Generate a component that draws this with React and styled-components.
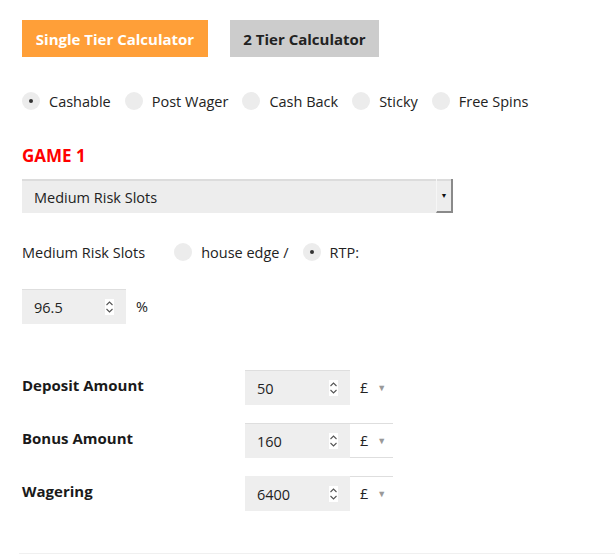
import styled, { createGlobalStyle } from "styled-components";

const Global = createGlobalStyle`
  body {
    margin: 0;
    background: #fff;
    font-family: "Open Sans", "Noto Sans", sans-serif;
    color: #222;
  }
`;

const Page = styled.div`
  width: 615px;
  height: 555px;
  box-sizing: border-box;
  padding: 20px 0 0 22px;
  position: relative;
  overflow: hidden;
`;

const Tabs = styled.div`
  display: flex;
  gap: 22px;
`;

const Tab = styled.button`
  width: ${(p) => p.$w}px;
  height: 37px;
  padding: 0;
  border: 0;
  font-family: inherit;
  font-size: 15px;
  font-weight: 700;
  background: ${(p) => (p.$active ? "#ff9f38" : "#cccccc")};
  color: ${(p) => (p.$active ? "#fff" : "#222")};
`;

const RadioRow = styled.div`
  display: flex;
  align-items: center;
  margin-top: 35px;
  height: 18px;
`;

const Option = styled.label`
  display: flex;
  align-items: center;
  gap: 9px;
  margin-right: 14px;
  font-size: 14.5px;
  color: #222;
`;

const Dot = styled.span`
  width: 18px;
  height: 18px;
  border-radius: 50%;
  background: #ececec;
  display: flex;
  align-items: center;
  justify-content: center;
  flex-shrink: 0;

  &::after {
    content: "";
    width: 4px;
    height: 4px;
    border-radius: 50%;
    background: ${(p) => (p.$on ? "#333" : "transparent")};
  }
`;

const Heading = styled.h2`
  margin: 35px 0 0;
  font-size: 17px;
  font-weight: 700;
  color: #f00;
  line-height: 22px;
`;

const Select = styled.div`
  margin-top: 12px;
  width: 431px;
  height: 34px;
  box-sizing: border-box;
  display: flex;
  background: #ededed;
  border-top: 2px solid #dcdcdc;
`;

const SelectText = styled.span`
  flex: 1;
  padding-left: 12px;
  display: flex;
  align-items: center;
  font-size: 14.5px;
`;

const SelectArrow = styled.span`
  width: 14px;
  display: flex;
  align-items: center;
  justify-content: center;
  border-left: 1px solid #f6f6f6;
  border-right: 2px solid #8a8a8a;
  border-bottom: 2px solid #8a8a8a;
  margin-top: -2px;
  font-size: 7px;
  color: #111;
`;

const EdgeRow = styled.div`
  display: flex;
  align-items: center;
  margin-top: 30px;
  height: 18px;
`;

const Plain = styled.span`
  font-size: 14.5px;
  margin-right: 29px;
`;

const PercentRow = styled.div`
  display: flex;
  align-items: center;
  gap: 10px;
  margin-top: 28px;
  font-size: 14.5px;
`;

const NumBox = styled.div`
  width: ${(p) => p.$w || 105}px;
  height: 35px;
  box-sizing: border-box;
  background: #eeeeee;
  border-top: 1px solid ${(p) => (p.$line ? "#dedede" : "#eeeeee")};
  display: flex;
  align-items: center;
  padding: 0 12px;
  font-size: 14.5px;
  color: #222;
`;

const Value = styled.span`
  flex: 1;
`;

const Spinner = styled.span`
  width: 9px;
  height: 16px;
  background: #fff;
  display: flex;
`;

const Fields = styled.div`
  margin-top: 46px;
  display: flex;
  flex-direction: column;
  gap: 18px;
`;

const Field = styled.div`
  display: flex;
  align-items: center;
  height: 35px;
`;

const Label = styled.span`
  width: 223px;
  font-size: 15px;
  font-weight: 700;
  color: #1a1a1a;
  margin-top: -5px;
`;

const Currency = styled.div`
  width: 43px;
  height: 35px;
  box-sizing: border-box;
  padding-left: 10px;
  display: flex;
  align-items: center;
  gap: 9px;
  font-size: 14.5px;
  border-top: 1px solid ${(p) => (p.$top ? "#dedede" : "transparent")};
  border-bottom: 1px solid ${(p) => (p.$bottom ? "#dedede" : "transparent")};
`;

const Caret = styled.span`
  font-size: 9px;
  color: #999;
`;

const Rule = styled.div`
  position: absolute;
  left: 19px;
  right: 0;
  bottom: 1px;
  height: 1px;
  background: #f0f0f0;
`;

const SpinIcon = () => (
  <Spinner>
    <svg width="9" height="16" viewBox="0 0 9 16">
      <path d="M1.5 6 L4.5 3 L7.5 6" fill="none" stroke="#555" strokeWidth="1.1" />
      <path d="M1.5 10 L4.5 13 L7.5 10" fill="none" stroke="#555" strokeWidth="1.1" />
    </svg>
  </Spinner>
);

const bonusTypes = [
  { name: "Cashable", on: true },
  { name: "Post Wager" },
  { name: "Cash Back" },
  { name: "Sticky" },
  { name: "Free Spins" },
];

const amounts = [
  { label: "Deposit Amount", value: "50", top: false, bottom: false, line: true },
  { label: "Bonus Amount", value: "160", top: true, bottom: true, line: true },
  { label: "Wagering", value: "6400", top: true, bottom: false, line: false },
];

export default function App() {
  return (
    <Page>
      <Global />
      <Tabs>
        <Tab $active $w={186}>Single Tier Calculator</Tab>
        <Tab $w={149}>2 Tier Calculator</Tab>
      </Tabs>

      <RadioRow>
        {bonusTypes.map((b) => (
          <Option key={b.name}>
            <Dot $on={b.on} />
            {b.name}
          </Option>
        ))}
      </RadioRow>

      <Heading>GAME 1</Heading>
      <Select>
        <SelectText>Medium Risk Slots</SelectText>
        <SelectArrow>▼</SelectArrow>
      </Select>

      <EdgeRow>
        <Plain>Medium Risk Slots</Plain>
        <Option>
          <Dot />
          house edge /
        </Option>
        <Option>
          <Dot $on />
          RTP:
        </Option>
      </EdgeRow>

      <PercentRow>
        <NumBox $w={104} $line>
          <Value>96.5</Value>
          <SpinIcon />
        </NumBox>
        %
      </PercentRow>

      <Fields>
        {amounts.map((a) => (
          <Field key={a.label}>
            <Label>{a.label}</Label>
            <NumBox $line={a.line}>
              <Value>{a.value}</Value>
              <SpinIcon />
            </NumBox>
            <Currency $top={a.top} $bottom={a.bottom}>
              £<Caret>▼</Caret>
            </Currency>
          </Field>
        ))}
      </Fields>
      <Rule />
    </Page>
  );
}
